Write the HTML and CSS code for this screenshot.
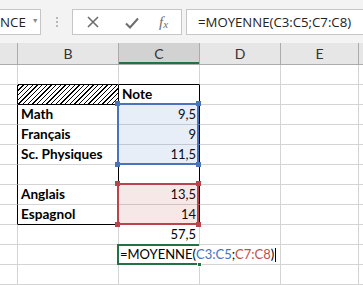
FILE: index.html
```html
<!DOCTYPE html>
<html>
<head>
    <title>Moyenne</title>
    <link rel="stylesheet" href="styles.css">
</head>
<body>
    <div class="toolbar">
        <div class="name-box">
            <span class="name-text">NCE</span>
            <span class="drop">&#9660;</span>
        </div>
        <div class="grip"><i></i><i></i><i></i></div>
        <div class="fx-buttons">
            <svg class="btn-x" width="12" height="12" viewBox="0 0 12 12"><path d="M1 1 L11 11 M11 1 L1 11" stroke="#6d6d6d" stroke-width="1.6" fill="none"/></svg>
            <svg class="btn-ok" width="14" height="12" viewBox="0 0 14 12"><path d="M1 6.5 L5 10.5 L13 1.5" stroke="#6d6d6d" stroke-width="2" fill="none"/></svg>
            <span class="btn-fx">f<sub>x</sub></span>
        </div>
        <div class="formula-input">=MOYENNE(C3:C5;C7:C8)</div>
    </div>

    <div class="sheet">
        <div class="hd"></div>
        <div class="hd">B</div>
        <div class="hd hd-active">C</div>
        <div class="hd">D</div>
        <div class="hd">E</div>
        <div class="hd"></div>

        <!-- row 1 -->
        <div class="c"></div>
        <div class="c bb"></div>
        <div class="c bb"></div>
        <div class="c"></div><div class="c"></div><div class="c"></div>

        <!-- row 2 -->
        <div class="c br"></div>
        <div class="c hatch br bb"></div>
        <div class="c br bb bold">Note</div>
        <div class="c"></div><div class="c"></div><div class="c"></div>

        <!-- row 3 -->
        <div class="c br"></div>
        <div class="c br bold">Math</div>
        <div class="c br num">9,5</div>
        <div class="c"></div><div class="c"></div><div class="c"></div>

        <!-- row 4 -->
        <div class="c br"></div>
        <div class="c br bold">Français</div>
        <div class="c br num">9</div>
        <div class="c"></div><div class="c"></div><div class="c"></div>

        <!-- row 5 -->
        <div class="c br"></div>
        <div class="c br bold">Sc. Physiques</div>
        <div class="c br num">11,5</div>
        <div class="c"></div><div class="c"></div><div class="c"></div>

        <!-- row 6 -->
        <div class="c br"></div>
        <div class="c br"></div>
        <div class="c br"></div>
        <div class="c"></div><div class="c"></div><div class="c"></div>

        <!-- row 7 -->
        <div class="c br"></div>
        <div class="c br bold">Anglais</div>
        <div class="c br num">13,5</div>
        <div class="c"></div><div class="c"></div><div class="c"></div>

        <!-- row 8 -->
        <div class="c br"></div>
        <div class="c br bb bold">Espagnol</div>
        <div class="c br bb num">14</div>
        <div class="c"></div><div class="c"></div><div class="c"></div>

        <!-- row 9 -->
        <div class="c"></div>
        <div class="c"></div>
        <div class="c num">57,5</div>
        <div class="c"></div><div class="c"></div><div class="c"></div>

        <!-- row 10 -->
        <div class="c"></div>
        <div class="c"></div>
        <div class="c"></div>
        <div class="c"></div><div class="c"></div><div class="c"></div>

        <!-- row 11 -->
        <div class="c"></div>
        <div class="c"></div>
        <div class="c"></div>
        <div class="c"></div><div class="c"></div><div class="c"></div>

        <div class="range range-blue">
            <i class="h tl"></i><i class="h tr"></i><i class="h bl"></i><i class="h brh"></i>
        </div>
        <div class="range range-red">
            <i class="h tl"></i><i class="h tr"></i><i class="h bl"></i><i class="h brh"></i>
        </div>
        <div class="active-cell">
            <span class="editor">=MOYENNE(<span class="ref-blue">C3:C5</span>;<span class="ref-red">C7:C8</span>)<span class="caret"></span></span>
            <i class="h-green"></i>
        </div>
    </div>
</body>
</html>
```

FILE: styles.css
```css
* {
    box-sizing: border-box;
    margin: 0;
    padding: 0;
}

body {
    width: 363px;
    height: 285px;
    overflow: hidden;
    background: #fff;
    font-family: 'Lato', 'Liberation Sans', sans-serif;
}

.toolbar {
    height: 43px;
    background: #f3f3f3;
    display: flex;
    align-items: flex-start;
    padding-top: 9px;
}

.name-box {
    width: 43px;
    height: 26px;
    margin-left: -2px;
    background: #fff;
    border: 1px solid #c6c6c6;
    display: flex;
    align-items: center;
    padding-left: 1px;
    font-family: 'Open Sans', sans-serif;
    font-size: 13.3px;
    color: #222;
}

.drop {
    font-size: 7px;
    color: #888;
    margin-left: 6px;
    margin-top: -3px;
}

.grip {
    width: 31px;
    display: flex;
    flex-direction: column;
    align-items: center;
    gap: 2px;
    padding-top: 8px;
}

.grip i {
    width: 2px;
    height: 2px;
    background: #b8b8b8;
}

.fx-buttons {
    width: 110px;
    height: 26px;
    background: #fff;
    border: 1px solid #c6c6c6;
    display: flex;
    align-items: center;
    padding-left: 14px;
}

.btn-x {
    margin-right: 26px;
}

.btn-ok {
    margin-right: 20px;
    margin-top: 2px;
}

.btn-fx {
    font-family: 'Liberation Serif', serif;
    font-style: italic;
    font-size: 15px;
    color: #6d6d6d;
}

.btn-fx sub {
    font-size: 11px;
    vertical-align: -1px;
}

.formula-input {
    flex: 1;
    height: 26px;
    margin-left: 4px;
    background: #fff;
    border: 1px solid #c6c6c6;
    border-right: none;
    padding-left: 11px;
    display: flex;
    align-items: center;
    font-family: 'Open Sans', sans-serif;
    font-size: 13.2px;
    color: #222;
}

.sheet {
    position: relative;
    display: grid;
    grid-template-columns: 18px 101px 81px 81px 78px 1fr;
    grid-template-rows: 22px repeat(11, 20px);
}

.hd {
    background: #e6e6e6;
    border-right: 1px solid #ababab;
    border-bottom: 1px solid #ababab;
    display: flex;
    align-items: center;
    justify-content: center;
    font-size: 14px;
    color: #333;
}

.hd-active {
    background: #d2d2d2;
    box-shadow: inset 0 -2px 0 #217346;
}

.c {
    border-right: 1px solid #d4d4d4;
    border-bottom: 1px solid #d4d4d4;
    display: flex;
    align-items: flex-end;
    padding: 0 3px 1px 3px;
    font-size: 13px;
    line-height: 17px;
    color: #000;
    white-space: nowrap;
}

.c.br {
    border-right-color: #000;
}

.c.bb {
    border-bottom-color: #000;
}

.bold {
    font-weight: bold;
    font-size: 13.6px;
}

.num {
    justify-content: flex-end;
}

.hatch {
    background: repeating-linear-gradient(135deg, #000 0 1px, #fff 1px 3.3px);
}

.range {
    position: absolute;
    left: 117px;
    width: 82px;
    border: 2px solid;
}

.range-blue {
    top: 60px;
    height: 62px;
    border-color: #4a73be;
    background: rgba(68, 114, 196, 0.12);
}

.range-red {
    top: 140px;
    height: 42px;
    border-color: #b8444e;
    background: rgba(192, 80, 77, 0.13);
}

.h {
    position: absolute;
    width: 5px;
    height: 5px;
}

.range-blue .h { background: #4a73be; }
.range-red .h { background: #b8444e; }

.tl { left: -4px; top: -4px; }
.tr { right: -4px; top: -4px; }
.bl { left: -4px; bottom: -4px; }
.brh { right: -4px; bottom: -4px; }

.active-cell {
    position: absolute;
    left: 117px;
    top: 201px;
    width: 82px;
    height: 21px;
    border: 2px solid #217346;
    border-right: none;
}

.editor {
    position: absolute;
    left: 1px;
    top: 0;
    height: 17px;
    padding-right: 3px;
    background: #fff;
    font-size: 13px;
    line-height: 17px;
    white-space: nowrap;
    color: #000;
    display: flex;
    align-items: center;
}

.ref-blue { color: #4472c4; }
.ref-red { color: #c0504d; }

.caret {
    width: 1px;
    height: 14px;
    background: #000;
    margin-left: 1px;
}

.h-green {
    position: absolute;
    left: 78px;
    bottom: -4px;
    width: 5px;
    height: 5px;
    background: #217346;
    border: 1px solid #fff;
}
```
